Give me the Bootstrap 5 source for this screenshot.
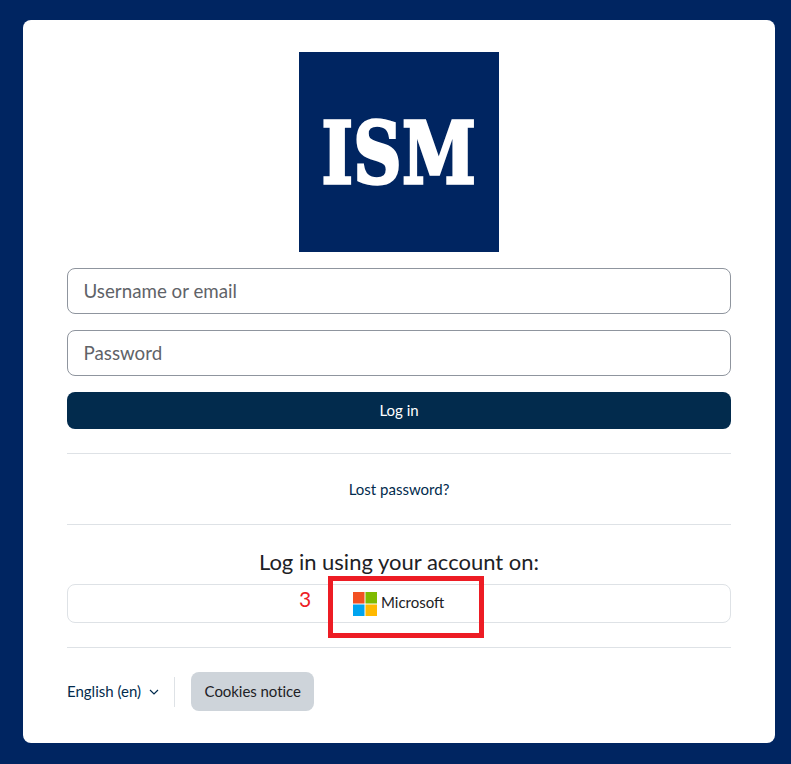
<!DOCTYPE html>
<html lang="en">
<head>
    <meta charset="UTF-8">
    <title>Log in</title>
    <link href="https://cdn.jsdelivr.net/npm/bootstrap@5.3.2/dist/css/bootstrap.min.css" rel="stylesheet">
    <style>
        html, body { height: 100%; }
        body { background: #002561; font-family: "Lato", "Liberation Sans", sans-serif; font-size: 15px; color: #1d2125; overflow: hidden; }
        .page-wrap { padding: 20px 16px 0 23px; }
        .login-box { width: 752px; height: 723px; background: #fff; border-radius: 8px; padding: 32px 44px 0; position: relative; }
        .logo-box { width: 200px; height: 200px; background: #002561; margin: 0 auto 16px; overflow: hidden; }
        .logo-text { font-family: "DejaVu Serif", serif; font-weight: 700; font-size: 85px; line-height: 1; color: #fff; -webkit-text-stroke: 3.5px #fff; transform: scaleX(.78); white-space: nowrap; letter-spacing: 1px; padding-top: 3px; }
        .login-input.form-control { height: 46px; border-radius: 8px; border-color: #8f959e; font-size: 18.75px; padding: 0 16px 2px 15.5px; margin-bottom: 16px; color: #1d2125; }
        .login-input::placeholder { color: #5f6368; opacity: 1; }
        .login-btn.btn { height: 37px; background: #022b4d; border: 0; border-radius: 8px; color: #fff; font-size: 15px; padding: 0; }
        .login-rule { margin: 0; border-color: #dee2e6; opacity: 1; }
        .lost-row { height: 70px; }
        .lost-link { color: #022b4d; text-decoration: none; }
        .sso-title { font-size: 22px; font-weight: 400; line-height: 27px; margin: 23px 0 9px; text-align: center; }
        .sso-btn { height: 39px; border: 1px solid #dee2e6; border-radius: 8px; padding: 0 0 2px 285px; margin-bottom: 24px; font-size: 15px; }
        .sso-icon { margin: 2px 4px 0 0; }
        .lang-link { color: #022b4d; text-decoration: none; }
        .foot-sep { width: 1px; height: 30px; background: #dee2e6; margin: 0 16px 0 15px; }
        .cookie-btn.btn { height: 39px; background: #ced4da; border: 0; border-radius: 8px; font-size: 15px; color: #1d2125; padding: 0 13.5px; letter-spacing: -.05px; }
        .mark-box { position: absolute; left: 305px; top: 556px; width: 156px; height: 62px; border: 5px solid #ed1c24; }
        .mark-num { position: absolute; left: 276px; top: 566px; color: #ed1c24; font-size: 21px; line-height: 26px; }
    </style>
</head>
<body>
    <div class="page-wrap">
        <div class="login-box">
            <div class="logo-box d-flex align-items-center justify-content-center">
                <span class="logo-text">ISM</span>
            </div>

            <form>
                <input type="text" class="form-control login-input" placeholder="Username or email">
                <input type="password" class="form-control login-input" placeholder="Password">
                <button type="button" class="btn login-btn w-100 d-block">Log in</button>
            </form>

            <hr class="login-rule mt-4">
            <div class="lost-row d-flex align-items-center justify-content-center">
                <a href="#" class="lost-link">Lost password?</a>
            </div>
            <hr class="login-rule">

            <h2 class="sso-title">Log in using your account on:</h2>
            <div class="sso-btn d-flex align-items-center">
                <svg width="24" height="24" viewBox="0 0 25 25" class="sso-icon flex-shrink-0">
                    <rect width="12" height="12" fill="#f25022"/>
                    <rect x="13" width="12" height="12" fill="#7fba00"/>
                    <rect y="13" width="12" height="12" fill="#00a4ef"/>
                    <rect x="13" y="13" width="12" height="12" fill="#ffb900"/>
                </svg>
                <span>Microsoft</span>
            </div>
            <hr class="login-rule">

            <div class="d-flex align-items-center mt-4">
                <a href="#" class="lang-link d-flex align-items-center">English (en)
                    <svg width="10" height="6" viewBox="0 0 10 6" class="ms-2"><path d="M1 1l4 4 4-4" fill="none" stroke="#022b4d" stroke-width="1.2"/></svg>
                </a>
                <div class="foot-sep"></div>
                <button type="button" class="btn cookie-btn">Cookies notice</button>
            </div>

            <!-- annotation on top of the screenshot -->
            <div class="mark-box"></div>
            <div class="mark-num">3</div>
        </div>
    </div>
</body>
</html>
